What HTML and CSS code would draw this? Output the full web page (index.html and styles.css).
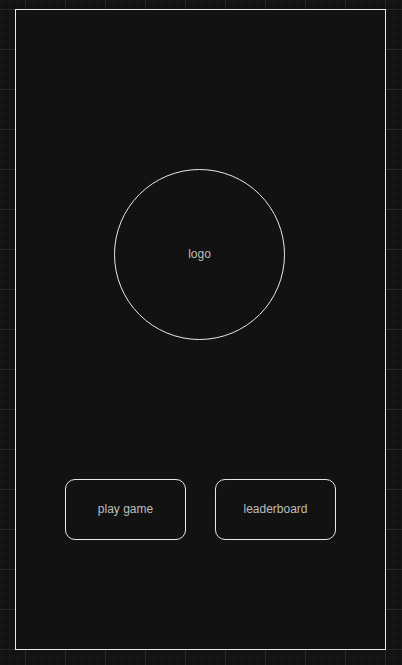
FILE: index.html
```html
<!DOCTYPE html>
<html lang="en">
<head>
<meta charset="utf-8">
<title>Home</title>
<link rel="stylesheet" href="styles.css">
</head>
<body>
<main class="frame">
  <div class="logo">logo</div>
  <div class="actions">
    <button class="btn">play game</button>
    <button class="btn">leaderboard</button>
  </div>
</main>
</body>
</html>
```
FILE: styles.css
```css
html, body {
  margin: 0;
  padding: 0;
}
body {
  width: 402px;
  height: 665px;
  overflow: hidden;
  background-color: #121212;
  background-image:
    linear-gradient(to right, #2a2a2a 1px, transparent 1px),
    linear-gradient(to bottom, #2a2a2a 1px, transparent 1px),
    linear-gradient(to right, #181818 1px, transparent 1px),
    linear-gradient(to bottom, #181818 1px, transparent 1px);
  background-size: 40px 40px, 40px 40px, 8px 8px, 8px 8px;
  background-position: 25px 9px, 25px 9px, 1px 1px, 1px 1px;
  font-family: "Liberation Sans", Arial, sans-serif;
  padding: 9px 0 0 15px;
  box-sizing: border-box;
}
.frame {
  width: 371px;
  height: 641px;
  box-sizing: border-box;
  border: 1px solid #e8e8e8;
  background: #121212;
  display: flex;
  flex-direction: column;
  align-items: center;
  padding-top: 159px;
}
.logo {
  width: 171px;
  height: 171px;
  box-sizing: border-box;
  border: 1px solid #e8e8e8;
  border-radius: 50%;
  display: flex;
  align-items: center;
  justify-content: center;
  padding-bottom: 1px;
  color: #bdbdbd;
  font-size: 12px;
  margin-left: -2px;
}
.actions {
  margin-top: 139px;
  display: flex;
  gap: 29px;
}
.btn {
  width: 121px;
  height: 61px;
  box-sizing: border-box;
  border: 1px solid #e8e8e8;
  border-radius: 10px;
  background: transparent;
  color: #bdbdbd;
  font-family: "Liberation Sans", Arial, sans-serif;
  font-size: 12px;
  padding: 0 0 1px;
}
```
